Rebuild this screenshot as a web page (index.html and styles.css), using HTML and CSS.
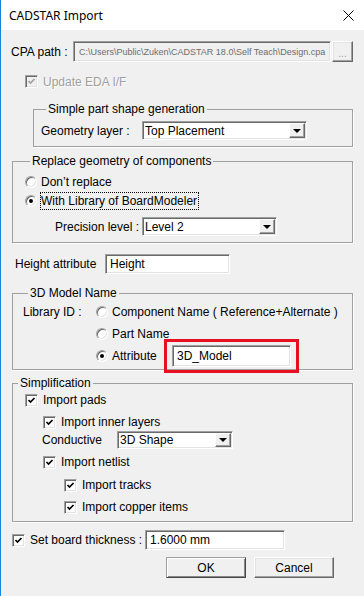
FILE: index.html
```html
<!DOCTYPE html>
<html lang="en">
<head>
    <meta charset="UTF-8">
    <title>CADSTAR Import</title>
    <link rel="stylesheet" href="styles.css">
</head>
<body>
    <div class="window">
        <div class="titlebar">
            <span class="title">CADSTAR Import</span>
            <svg class="close" width="11" height="11" viewBox="0 0 11 11">
                <path d="M0.5 0.5 L10.5 10.5 M10.5 0.5 L0.5 10.5" stroke="#000" stroke-width="1" fill="none"/>
            </svg>
        </div>

        <div class="content">
            <div class="row cpa-row">
                <span class="label cpa-label">CPA path :</span>
                <div class="field path">C:\Users\Public\Zuken\CADSTAR 18.0\Self Teach\Design.cpa</div>
                <button class="btn browse">...</button>
            </div>

            <div class="row update-row">
                <span class="check checked disabled">
                    <svg viewBox="0 0 9 9"><polyline points="1.5,4 3.5,6 7.5,2"/></svg>
                </span>
                <span class="dim">Update EDA I/F</span>
            </div>

            <fieldset class="group shape-group">
                <legend>Simple part shape generation</legend>
                <div class="row">
                    <span class="label geo-label">Geometry layer :</span>
                    <div class="select geo-select">
                        <span class="value">Top Placement</span>
                        <span class="drop"></span>
                    </div>
                </div>
            </fieldset>

            <fieldset class="group replace-group">
                <legend>Replace geometry of components</legend>
                <div class="row radio-row">
                    <span class="radio"></span>
                    <span class="opt">Don’t replace</span>
                </div>
                <div class="row radio-row">
                    <span class="radio on"></span>
                    <span class="opt focus">With Library of BoardModeler</span>
                </div>
                <div class="row precision-row">
                    <span class="label precision-label">Precision level :</span>
                    <div class="select precision-select">
                        <span class="value">Level 2</span>
                        <span class="drop"></span>
                    </div>
                </div>
            </fieldset>

            <div class="row height-row">
                <span class="label height-label">Height attribute</span>
                <div class="field height-field">Height</div>
            </div>

            <fieldset class="group model-group">
                <legend>3D Model Name</legend>
                <div class="row model-row">
                    <span class="label lib-label">Library ID :</span>
                    <span class="radio"></span>
                    <span class="opt">Component Name ( Reference+Alternate )</span>
                </div>
                <div class="row model-row indent">
                    <span class="radio"></span>
                    <span class="opt">Part Name</span>
                </div>
                <div class="row model-row indent">
                    <span class="radio on"></span>
                    <span class="opt attr-label">Attribute</span>
                    <div class="attr-wrap">
                        <div class="field attr-field">3D_Model</div>
                        <span class="highlight"></span>
                    </div>
                </div>
            </fieldset>

            <fieldset class="group simp-group">
                <legend>Simplification</legend>
                <div class="row simp-row lvl1">
                    <span class="check checked"><svg viewBox="0 0 9 9"><polyline points="1.5,4 3.5,6 7.5,2"/></svg></span>
                    <span>Import pads</span>
                </div>
                <div class="row simp-row lvl2">
                    <span class="check checked"><svg viewBox="0 0 9 9"><polyline points="1.5,4 3.5,6 7.5,2"/></svg></span>
                    <span>Import inner layers</span>
                </div>
                <div class="row conductive-row">
                    <span class="label cond-label">Conductive</span>
                    <div class="select cond-select">
                        <span class="value">3D Shape</span>
                        <span class="drop"></span>
                    </div>
                </div>
                <div class="row simp-row lvl2 netlist">
                    <span class="check checked"><svg viewBox="0 0 9 9"><polyline points="1.5,4 3.5,6 7.5,2"/></svg></span>
                    <span>Import netlist</span>
                </div>
                <div class="row simp-row lvl3 tracks">
                    <span class="check checked"><svg viewBox="0 0 9 9"><polyline points="1.5,4 3.5,6 7.5,2"/></svg></span>
                    <span>Import tracks</span>
                </div>
                <div class="row simp-row lvl3 copper">
                    <span class="check checked"><svg viewBox="0 0 9 9"><polyline points="1.5,4 3.5,6 7.5,2"/></svg></span>
                    <span>Import copper items</span>
                </div>
            </fieldset>

            <div class="row thick-row">
                <span class="check checked"><svg viewBox="0 0 9 9"><polyline points="1.5,4 3.5,6 7.5,2"/></svg></span>
                <span class="label thick-label">Set board thickness :</span>
                <div class="field thick-field">1.6000 mm</div>
            </div>

            <div class="row buttons">
                <button class="btn push default">OK</button>
                <button class="btn push">Cancel</button>
            </div>
        </div>
    </div>
</body>
</html>
```

FILE: styles.css
```css
*{
    margin: 0;
    padding: 0;
    box-sizing: border-box
}

body{
    font-family: "Liberation Sans", Arial, sans-serif;
    font-size: 12px;
    color: #000;
    background-color: #f0f0f0;
}

.window{
    width: 364px;
    height: 596px;
    background-color: #f0f0f0;
    border-left: 1px solid #1883d7;
    overflow: hidden;
}

.titlebar{
    height: 30px;
    background-color: #fff;
    display: flex;
    align-items: center;
    justify-content: space-between;
    padding: 0 10px 0 8px;
}

.title{
    font-family: "Noto Sans", sans-serif;
    font-size: 12px;
}

.close{
    display: block;
}

.content{
    padding: 0 11px 0 10px;
}

.row{
    display: flex;
    align-items: center;
}

.label{
    flex: none;
}

/* sunken boxes */
.field, .select{
    background-color: #fff;
    border: 1px solid;
    border-color: #a0a0a0 #fff #fff #a0a0a0;
    box-shadow: inset 1px 1px 0 #696969, inset -1px -1px 0 #e3e3e3;
    padding: 0 4px;
    display: flex;
    align-items: center;
    white-space: nowrap;
    overflow: hidden;
}

.btn{
    font-family: "Liberation Sans", Arial, sans-serif;
    font-size: 12px;
    background-color: #f0f0f0;
    border: 1px solid;
    border-color: #fff #696969 #696969 #fff;
    box-shadow: inset -1px -1px 0 #a0a0a0, inset 1px 1px 0 #e3e3e3;
    color: #000;
}

/* CPA path */
.cpa-row{
    margin-top: 11px;
    height: 21px;
}

.cpa-label{
    width: 62px;
}

.path{
    width: 258px;
    height: 21px;
    flex: none;
    background-color: #f0f0f0;
    color: #6d6d6d;
    font-size: 9px;
    padding-left: 5px;
}

.browse{
    width: 21px;
    height: 21px;
    flex: none;
    margin-left: 1px;
    color: #a0a0a0;
    font-size: 10px;
    line-height: 24px;
}

/* checkboxes and radios */
.check{
    width: 13px;
    height: 13px;
    flex: none;
    background-color: #fff;
    border: 1px solid;
    border-color: #a0a0a0 #fff #fff #a0a0a0;
    box-shadow: inset 1px 1px 0 #696969, inset -1px -1px 0 #e3e3e3;
    padding: 1px;
    margin-right: 5px;
}

.check svg{
    display: block;
    width: 9px;
    height: 9px;
    fill: none;
    stroke: #000;
    stroke-width: 1.7;
}

.check.disabled{
    background-color: #f0f0f0;
}

.check.disabled svg{
    stroke: #a0a0a0;
}

.dim{
    color: #a0a0a0;
    text-shadow: 1px 1px 0 #fff;
}

.radio{
    width: 12px;
    height: 12px;
    flex: none;
    border-radius: 50%;
    background-color: #fff;
    border: 1px solid;
    border-color: #a0a0a0 #fff #fff #a0a0a0;
    box-shadow: inset 1px 1px 0 #696969, inset -1px -1px 0 #e3e3e3;
    display: flex;
    align-items: center;
    justify-content: center;
}

.radio.on::after{
    content: "";
    width: 4px;
    height: 4px;
    border-radius: 50%;
    background-color: #000;
}

.opt{
    margin-left: 4px;
}

.opt.focus{
    margin-left: 3px;
    border: 1px dotted #000;
    padding: 1px 1px 1px 0;
    line-height: 14px;
}

.update-row{
    margin-top: 13px;
    height: 13px;
    padding-left: 14px;
}

/* group boxes */
.group{
    border: 1px solid #a0a0a0;
    box-shadow: 1px 1px 0 #fff;
    padding: 0;
    min-width: 0;
}

.group legend{
    margin-left: 5px;
    padding: 0 2px;
    line-height: 14px;
}

.shape-group{
    margin-top: 14px;
    margin-left: 22px;
    padding: 5px 0 6px 7px;
}

.geo-label{
    width: 101px;
}

.select{
    padding: 0 0 0 2px;
    justify-content: space-between;
}

.geo-select{
    width: 165px;
    height: 19px;
}

.drop{
    width: 16px;
    height: 15px;
    flex: none;
    margin-right: 1px;
    background-color: #f0f0f0;
    border: 1px solid;
    border-color: #fff #696969 #696969 #fff;
    box-shadow: inset -1px -1px 0 #a0a0a0;
    display: flex;
    align-items: center;
    justify-content: center;
}

.drop::after{
    content: "";
    border-left: 4px solid transparent;
    border-right: 4px solid transparent;
    border-top: 4px solid #000;
}

.replace-group{
    margin-top: 7px;
    margin-left: 1px;
    padding: 4px 0 6px 12px;
}

.radio-row{
    height: 19px;
}

.precision-row{
    margin-top: 7px;
    padding-left: 30px;
}

.precision-label{
    width: 87px;
}

.precision-select{
    width: 135px;
    height: 19px;
}

.height-row{
    margin-top: 11px;
    padding-left: 4px;
}

.height-label{
    width: 90px;
}

.height-field{
    width: 125px;
    height: 20px;
}

.model-group{
    margin-top: 12px;
    margin-left: 1px;
    padding: 1px 0 2px 10px;
}

.model-row{
    height: 22px;
}

.model-row.indent{
    padding-left: 73px;
}

.lib-label{
    width: 73px;
}

.attr-label{
    width: 60px;
}

.attr-wrap{
    position: relative;
}

.attr-field{
    width: 119px;
    height: 22px;
}

.highlight{
    position: absolute;
    top: -6px;
    left: -8px;
    right: -8px;
    bottom: -6px;
    border: 3px solid #e8101f;
}

.simp-group{
    margin-top: 6px;
    margin-left: 1px;
    padding: 1px 0 5px 0;
}

.simp-row{
    height: 18px;
}

.lvl1{
    padding-left: 12px;
}

.lvl2{
    padding-left: 30px;
    margin-top: 4px;
}

.lvl3{
    padding-left: 51px;
}

.netlist{
    margin-top: 4px;
}

.tracks{
    margin-top: 5px;
}

.copper{
    margin-top: 4px;
}

.conductive-row{
    padding-left: 29px;
}

.cond-label{
    width: 75px;
}

.cond-select{
    width: 116px;
    height: 18px;
}

.cond-select .drop{
    height: 14px;
}

.thick-row{
    margin-top: 8px;
    padding-left: 1px;
}

.thick-label{
    width: 115px;
}

.thick-field{
    width: 140px;
    height: 20px;
}

.buttons{
    margin-top: 7px;
    justify-content: flex-end;
    gap: 8px;
    padding-right: 19px;
}

.push{
    width: 80px;
    height: 21px;
}

.push.default{
    border-color: #a0a0a0 #464646 #464646 #a0a0a0;
    box-shadow: inset 1px 1px 0 #fff, inset -1px -1px 0 #888;
}
```
